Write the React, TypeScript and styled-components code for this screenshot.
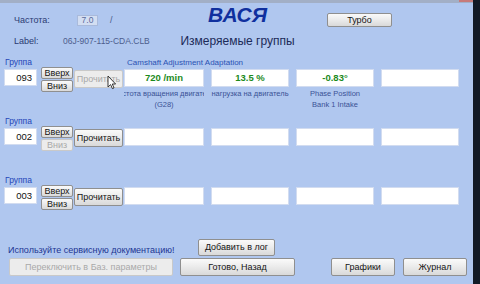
import styled, { createGlobalStyle } from 'styled-components'

const GlobalStyle = createGlobalStyle`
    html, body {
        margin: 0;
        padding: 0;
        background: #b0c7ef;
        overflow: hidden;
    }
    * {
        box-sizing: border-box;
    }
`

type Group = {
    num: string
    caption?: string
    readDisabled?: boolean
    downDisabled?: boolean
    values: string[]
    labels: string[][]
}

const groups: Group[] = [
    {
        num: '093',
        caption: 'Camshaft Adjustment Adaptation',
        readDisabled: true,
        values: ['720 /min', '13.5 %', '-0.83°', ''],
        labels: [['Частота вращения двигателя', '(G28)'], ['нагрузка на двигатель'], ['Phase Position', 'Bank 1 Intake'], []],
    },
    { num: '002', downDisabled: true, values: ['', '', '', ''], labels: [] },
    { num: '003', values: ['', '', '', ''], labels: [] },
]

function Cursor() {
    return (
        <CursorSld width="10" height="15" viewBox="0 0 10 15">
            <path d="M1 1 L1 12 L3.6 9.6 L5.4 13.6 L7 12.9 L5.3 9 L8.6 9 Z" fill="#fff" stroke="#222" strokeWidth="0.9" strokeLinejoin="round" />
        </CursorSld>
    )
}

export default function App() {
    return (
        <WindowSld>
            <GlobalStyle />
            <MainSld>
                <TopStripSld>
                    <CloseSld />
                </TopStripSld>

                <HeadRowSld>
                    <KeySld $width={63} $top={11}>Частота:</KeySld>
                    <FreqBoxSld>7.0</FreqBoxSld>
                    <SlashSld>/</SlashSld>
                    <TitleSld>ВАСЯ</TitleSld>
                    <ButtonSld $width={65} $height={14} $top={10} $left={32}>Турбо</ButtonSld>
                </HeadRowSld>

                <HeadRow2Sld>
                    <KeySld $width={49} $top={0}>Label:</KeySld>
                    <CodeSld>06J-907-115-CDA.CLB</CodeSld>
                    <SubtitleSld>Измеряемые группы</SubtitleSld>
                </HeadRow2Sld>

                {groups.map((g) => (
                    <GroupSld key={g.num}>
                        <GroupHeadSld>
                            <GroupLabelSld>Группа</GroupLabelSld>
                            {g.caption && <CaptionSld>{g.caption}</CaptionSld>}
                        </GroupHeadSld>
                        <ControlsSld>
                            <NumInputSld>{g.num}</NumInputSld>
                            <StackSld>
                                <ButtonSld $width={32} $height={12}>Вверх</ButtonSld>
                                <ButtonSld $width={32} $height={12} $top={1} disabled={g.downDisabled}>Вниз</ButtonSld>
                            </StackSld>
                            <ButtonSld $width={49} $height={18} $top={3} $left={1} disabled={g.readDisabled}>
                                Прочитать
                                {g.readDisabled && <Cursor />}
                            </ButtonSld>
                            <ValuesSld>
                                {g.values.map((v, i) => (
                                    <ValueBoxSld key={'v' + i}>{v}</ValueBoxSld>
                                ))}
                                {g.labels.map((lines, i) => (
                                    <SubLabelSld key={'l' + i}>
                                        {lines.map((l) => (
                                            <span key={l}>{l}</span>
                                        ))}
                                    </SubLabelSld>
                                ))}
                            </ValuesSld>
                        </ControlsSld>
                    </GroupSld>
                ))}

                <FootRowSld>
                    <NoticeSld>Используйте сервисную документацию!</NoticeSld>
                    <ButtonSld $width={77} $height={17}>Добавить в лог</ButtonSld>
                </FootRowSld>
                <FootRow2Sld>
                    <ButtonSld $width={164} $height={18} disabled>Переключить в Баз. параметры</ButtonSld>
                    <ButtonSld $width={115} $height={18} $left={7}>Готово, Назад</ButtonSld>
                    <ButtonSld $width={64} $height={18} $left={36}>Графики</ButtonSld>
                    <ButtonSld $width={64} $height={18} $left={8}>Журнал</ButtonSld>
                </FootRow2Sld>
            </MainSld>
            <EdgeSld />
        </WindowSld>
    )
}

const WindowSld = styled.div`
    display: flex;
    width: 480px;
    height: 284px;
    font-family: "Liberation Sans", Arial, sans-serif;
    background: #b0c7ef;
`

const MainSld = styled.div`
    flex: 1;
    display: flex;
    flex-direction: column;
`

const EdgeSld = styled.div`
    width: 7px;
    background: #121a26;
`

const TopStripSld = styled.div`
    height: 3px;
    background: #a2afc6;
    display: flex;
    justify-content: flex-end;
`

const CloseSld = styled.div`
    width: 14px;
    height: 2px;
    background: #c77a7a;
`

const HeadRowSld = styled.div`
    display: flex;
    align-items: flex-start;
    height: 31px;
    padding-left: 14px;
`

const HeadRow2Sld = styled.div`
    display: flex;
    align-items: flex-start;
    height: 23px;
    padding-left: 14px;
    padding-top: 1px;
`

const KeySld = styled.div<{ $width: number; $top: number }>`
    width: ${(p) => p.$width}px;
    margin-top: ${(p) => p.$top}px;
    font-size: 9px;
    line-height: 12px;
    color: #2b3b72;
`

const FreqBoxSld = styled.div`
    width: 21px;
    height: 11px;
    margin-top: 12px;
    background: #d3def2;
    border: 1px solid #a9badb;
    font-size: 8.5px;
    line-height: 9px;
    text-align: center;
    color: #5a6a9c;
`

const SlashSld = styled.div`
    width: 82px;
    padding-left: 12px;
    margin-top: 11px;
    font-size: 9px;
    line-height: 12px;
    color: #4a5a8a;
`

const TitleSld = styled.div`
    width: 115px;
    text-align: center;
    font-size: 21px;
    line-height: 24px;
    font-weight: bold;
    font-style: italic;
    color: #10309e;
`

const CodeSld = styled.div`
    width: 117px;
    font-size: 8.5px;
    line-height: 12px;
    color: #4d5d8d;
`

const SubtitleSld = styled.div`
    width: 115px;
    text-align: center;
    font-size: 12px;
    line-height: 12px;
    color: #1c2a58;
    white-space: nowrap;
`

const GroupSld = styled.div`
    height: 59px;
    display: flex;
    flex-direction: column;
`

const GroupHeadSld = styled.div`
    display: flex;
    height: 10px;
    align-items: center;
`

const GroupLabelSld = styled.div`
    width: 127px;
    padding-left: 5px;
    font-size: 8.5px;
    color: #2546b8;
`

const CaptionSld = styled.div`
    font-size: 8px;
    color: #2a52b4;
    white-space: nowrap;
`

const ControlsSld = styled.div`
    display: flex;
    align-items: flex-start;
    padding-left: 4px;
`

const NumInputSld = styled.div`
    width: 33px;
    height: 17px;
    margin-top: 2px;
    background: #fff;
    border: 1px solid #d2dcf0;
    padding-right: 4px;
    text-align: right;
    font-size: 9.5px;
    line-height: 15px;
    color: #111;
`

const StackSld = styled.div`
    display: flex;
    flex-direction: column;
    margin-left: 4px;
`

const ButtonSld = styled.button<{ $width: number; $height: number; $top?: number; $left?: number }>`
    position: relative;
    width: ${(p) => p.$width}px;
    height: ${(p) => p.$height}px;
    margin: ${(p) => p.$top || 0}px 0 0 ${(p) => p.$left || 0}px;
    padding: 0;
    border: 1px solid #8f8f8f;
    border-radius: 2px;
    background: linear-gradient(#fafafa, #ececec 45%, #d9d9d9);
    font-family: "Liberation Sans", Arial, sans-serif;
    font-size: 9px;
    line-height: 1;
    color: #151515;
    white-space: nowrap;
    display: flex;
    align-items: center;
    justify-content: center;

    &:disabled {
        background: #ececec;
        border-color: #c9c9c9;
        color: #a9a9a9;
    }
`

const CursorSld = styled.svg`
    position: absolute;
    left: 32px;
    top: 4px;
`

const ValuesSld = styled.div`
    display: grid;
    grid-template-columns: 80px 78px 78px 78px;
    grid-template-rows: 18px auto;
    column-gap: 7px;
    margin-left: 1px;
    margin-top: 2px;
`

const ValueBoxSld = styled.div`
    background: #fff;
    border: 1px solid #d2dcf0;
    font-size: 9.5px;
    font-weight: bold;
    line-height: 16px;
    text-align: center;
    color: #1c8a1c;
`

const SubLabelSld = styled.div`
    display: flex;
    flex-direction: column;
    align-items: center;
    overflow: hidden;
    padding-top: 1px;
    font-size: 7.5px;
    line-height: 11px;
    color: #3a5296;
    white-space: nowrap;
`

const FootRowSld = styled.div`
    display: flex;
    align-items: flex-end;
    height: 22px;
    padding-left: 8px;
`

const NoticeSld = styled.div`
    width: 190px;
    font-size: 9px;
    line-height: 12px;
    color: #1d3592;
    white-space: nowrap;
`

const FootRow2Sld = styled.div`
    display: flex;
    padding-left: 9px;
    padding-top: 2px;
`
